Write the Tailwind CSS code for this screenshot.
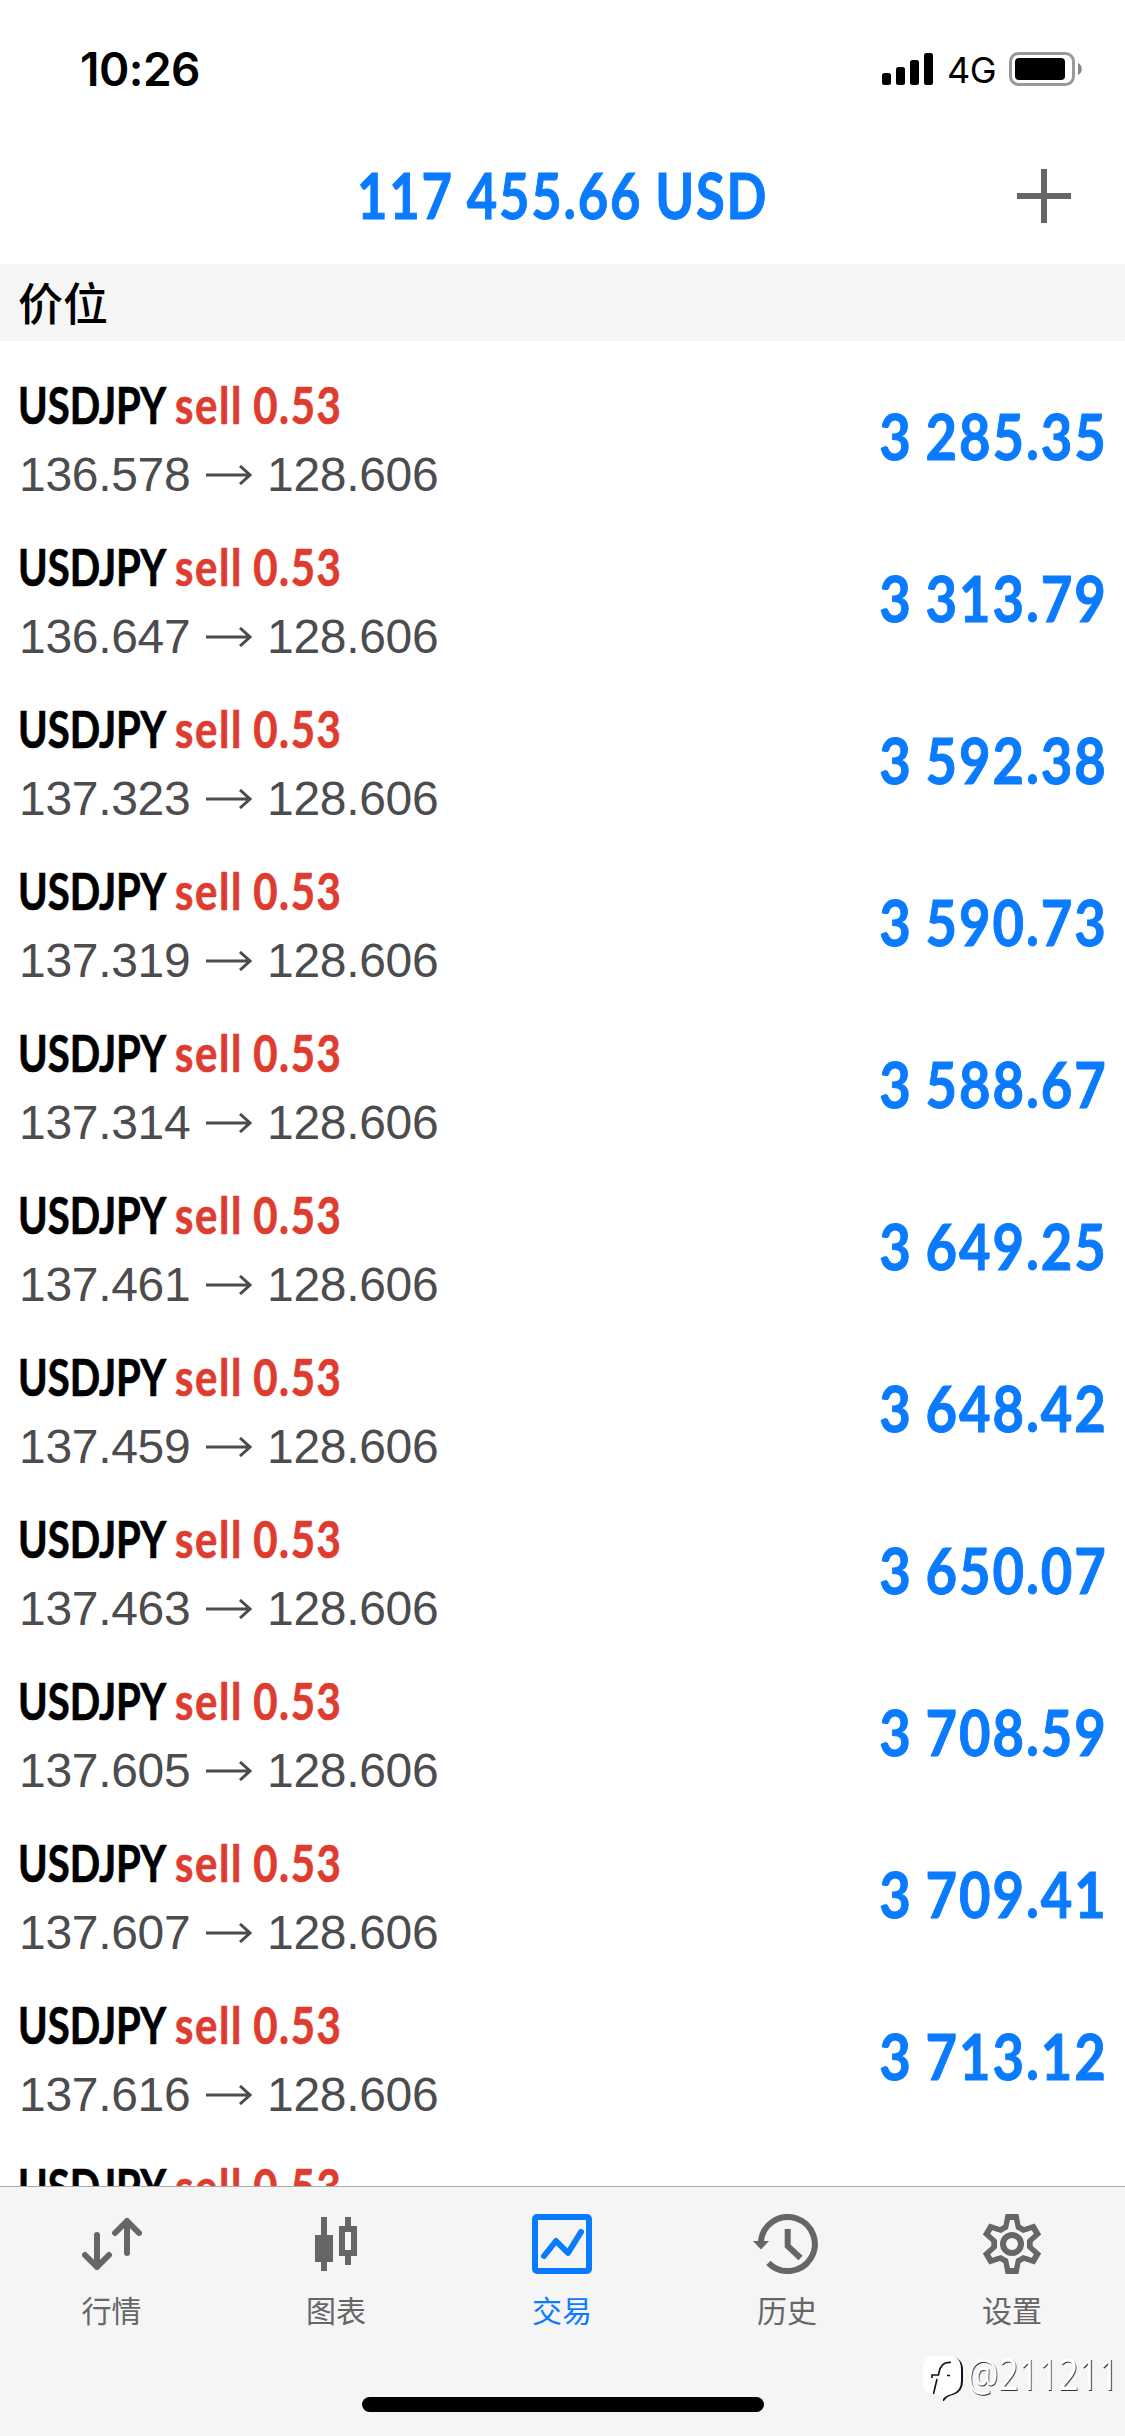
<!DOCTYPE html>
<html lang="zh-CN">
<head>
<meta charset="utf-8">
<title>交易</title>
<script src="https://cdn.jsdelivr.net/npm/@tailwindcss/browser@4"></script>
</head>
<body class="bg-white">
<div class="relative flex h-[2436px] w-[1125px] flex-col overflow-hidden bg-white font-['Lato','Noto_Sans_CJK_SC',sans-serif]">
  <!-- status bar -->
  <header class="flex h-[132px] shrink-0 items-start justify-between pl-[80px] pr-[41px]">
    <div class="mt-[42px] font-['Inter','Noto_Sans_CJK_SC',sans-serif] text-[46px] leading-[54px] font-semibold tracking-[-0.5px] text-black">10:26</div>
    <div class="mt-[52px] flex items-start">
      <svg class="mt-[1px] h-[32px] w-[52px]" viewBox="0 0 52 32"><rect x="0" y="20" width="9" height="12" rx="2.500"/><rect x="14" y="14" width="9" height="18" rx="2.500"/><rect x="28" y="7" width="9" height="25" rx="2.500"/><rect x="42" y="0" width="9" height="32" rx="2.500"/></svg>
      <div class="ml-[13px] w-[62px] font-['Inter',sans-serif] text-[36px] leading-[36px] tracking-[-0.5px]">4G</div>
      <svg class="h-[34px] w-[75px]" viewBox="0 0 75 34"><rect x="1.500" y="1.500" width="63" height="31" rx="8" fill="none" stroke="#999" stroke-width="3"/><rect x="6" y="6" width="50" height="22" rx="4"/><path d="M69 11c5 2 5 10 0 12z" fill="#888"/></svg>
    </div>
  </header>
  <!-- balance -->
  <div class="grid h-[132px] shrink-0 grid-cols-[225px_1fr_225px] items-center pb-[4px]">
    <span></span>
    <h1 class="-mt-[2px] flex justify-center text-[64px] leading-[80px] font-bold text-[#0a7aff] [-webkit-text-stroke:1px_#0a7aff]"><span class="inline-block origin-center scale-x-[0.82] tracking-[2.2px] whitespace-nowrap [word-spacing:-2px]">117 455.66 USD</span></h1>
    <svg class="ml-[117px] h-[54px] w-[54px]" viewBox="0 0 54 54"><path d="M27 0v54M0 27h54" stroke="#666" stroke-width="6"/></svg>
  </div>
  <div class="flex h-[77px] shrink-0 items-center bg-[#f6f6f6] pl-[18px] font-['Noto_Sans_CJK_SC',sans-serif] text-[45px] leading-[75px] font-medium text-black"><span class="-mt-[3px]">价位</span></div>
  <main id="rows" class="flex min-h-0 grow flex-col overflow-hidden"></main>
  <!-- tab bar -->
  <nav class="grid h-[250px] shrink-0 grid-cols-[223px_226px_226px_224px_226px] border-t border-[#aaa] bg-[#f5f5f5] pt-[27px] text-center font-['Noto_Sans_CJK_SC',sans-serif] text-[30px] leading-[40px] text-[#666]">
    <div class="flex flex-col items-center gap-[15px]">
      <svg class="h-[60px] w-[60px]" viewBox="0 0 60 60" fill="none" stroke="#666" stroke-width="6" stroke-linecap="round" stroke-linejoin="round"><path d="M15 21v32M3 41l12 12 12-12M45 39V7M33 19L45 7l12 12"/></svg>行情
    </div>
    <div class="flex flex-col items-center gap-[15px]">
      <svg class="h-[60px] w-[60px]" viewBox="0 0 60 60" fill="#666"><path d="M15 3h6v18h6v27h-6v9h-6v-9H9V21h6zM39 3h6v9h6v30h-6v9h-6v-9h-6V12h6zM39 18v18h6V18z" fill-rule="evenodd"/></svg>图表
    </div>
    <div class="flex flex-col items-center gap-[15px] text-[#0a7aff]">
      <svg class="h-[60px] w-[60px]" viewBox="0 0 60 60" fill="none" stroke="currentColor" stroke-width="6" stroke-linecap="round" stroke-linejoin="round"><rect x="3" y="3" width="54" height="54" rx="2"/><path d="M12 42l12-15 12 12 13-21"/></svg>交易
    </div>
    <div class="flex flex-col items-center gap-[15px]">
      <svg class="h-[60px] w-[68px]" viewBox="0 0 68 60" fill="none" stroke="#666" stroke-width="6"><path d="M7.900 28A27 27 0 1 1 15.400 48.800M34.700 15v17l12.800 12"/><path d="M0 27h16l-8 8.500z" fill="#666" stroke="none"/></svg>历史
    </div>
    <div class="flex flex-col items-center gap-[15px]">
      <svg class="h-[60px] w-[60px]" viewBox="-30 -30 60 60"><path fill="#666" fill-rule="evenodd" d="M-8.500-19L-6.500-30H6.500L8.500-19 12.200-16.900 22.700-20.600 29.200-9.400 20.700-2.100V2.100L29.200 9.400 22.700 20.600 12.200 16.900 8.500 19 6.500 30H-6.500L-8.500 19-12.200 16.900-22.700 20.600-29.200 9.400-20.700 2.100V-2.100L-29.200-9.400-22.700-20.600-12.200-16.900zM-4-15L-11-11-19.800-13.700-21.800-10.300-15-4V4L-21.800 10.300-19.800 13.700-11 11-4 15-2 24H2L4 15 11 11 19.800 13.700 21.800 10.300 15 4V-4L21.800-10.300 19.800-13.700 11-11 4-15 2-24H-2z"/><circle r="9" fill="none" stroke="#666" stroke-width="6"/></svg>设置
    </div>
  </nav>
  <div class="absolute left-[362px] top-[2397px] h-[15px] w-[402px] rounded-full bg-black"></div>
  <!-- watermark -->
  <div class="absolute left-[922px] top-[2352px] flex items-start">
    <svg class="h-[52px] w-[45px] shrink-0" viewBox="0 0 45 52"><path d="M14 5h13Q41 5 41 18v11q0 11-10 14-6 1-9 6l-1 0v-8z" fill="#111"/><path d="M13 4h13Q39 4 39 17v12q0 10-9 13-6 1-10 6v-5h-7Q1 43 1 31V16Q1 4 13 4z" fill="#fff"/><path d="M29 10.500q-10-1-12 10l-.5 2.500H10v3M15 27l-3.500 15M25 23.500h3" fill="none" stroke="#111" stroke-width="1.600"/></svg>
    <span class="inline-block origin-left scale-x-[0.815] whitespace-nowrap font-['Open_Sans','Noto_Sans_CJK_SC',sans-serif] text-[43px] leading-[44px] font-normal text-white [text-shadow:1px_1px_0_#333]">@211211</span>
  </div>
</div>
<script>
const rows = [['136.578','3 285.35'],['136.647','3 313.79'],['137.323','3 592.38'],['137.319','3 590.73'],['137.314','3 588.67'],['137.461','3 649.25'],['137.459','3 648.42'],['137.463','3 650.07'],['137.605','3 708.59'],['137.607','3 709.41'],['137.616','3 713.12'],['137.620','3 715.00']];
document.getElementById('rows').innerHTML = rows.map(([p, v]) => `
  <section class="flex h-[162px] shrink-0 items-start justify-between pl-[18px] pr-[17px]">
    <div class="pt-[34px]">
      <div class="flex h-[60px] items-center text-[51px] leading-[60px] font-bold">
        <div class="w-[157px]"><span class="inline-block origin-left scale-x-[0.785] whitespace-nowrap text-black [-webkit-text-stroke:0.7px_#000]">USDJPY</span></div>
        <span class="inline-block origin-left scale-x-[0.82] tracking-[2px] whitespace-nowrap text-[#df3c30] [-webkit-text-stroke:0.7px_#df3c30] [word-spacing:-2px]">sell 0.53</span>
      </div>
      <div class="mt-[12px] flex h-[56px] items-center pl-px font-['Liberation_Sans',sans-serif] text-[48px] leading-[56px] text-[#4c4c4e]">
        <span class="w-[187px] tracking-[-0.3px]">${p}</span>
        <svg class="mr-[15px] h-[20px] w-[46px]" viewBox="0 0 46 20" fill="none" stroke="#4c4c4e" stroke-width="3"><path d="M0 10h44M34 1l10 9-10 9"/></svg>
        <span class="tracking-[-0.3px]">128.606</span>
      </div>
    </div>
    <div class="pt-[55px] text-[64px] leading-[80px] font-bold text-[#0a7aff] [-webkit-text-stroke:1px_#0a7aff]"><span class="inline-block origin-right scale-x-[0.85] tracking-[2.3px] whitespace-nowrap [word-spacing:-3px]">${v}</span></div>
  </section>`).join('');
</script>
</body>
</html>
